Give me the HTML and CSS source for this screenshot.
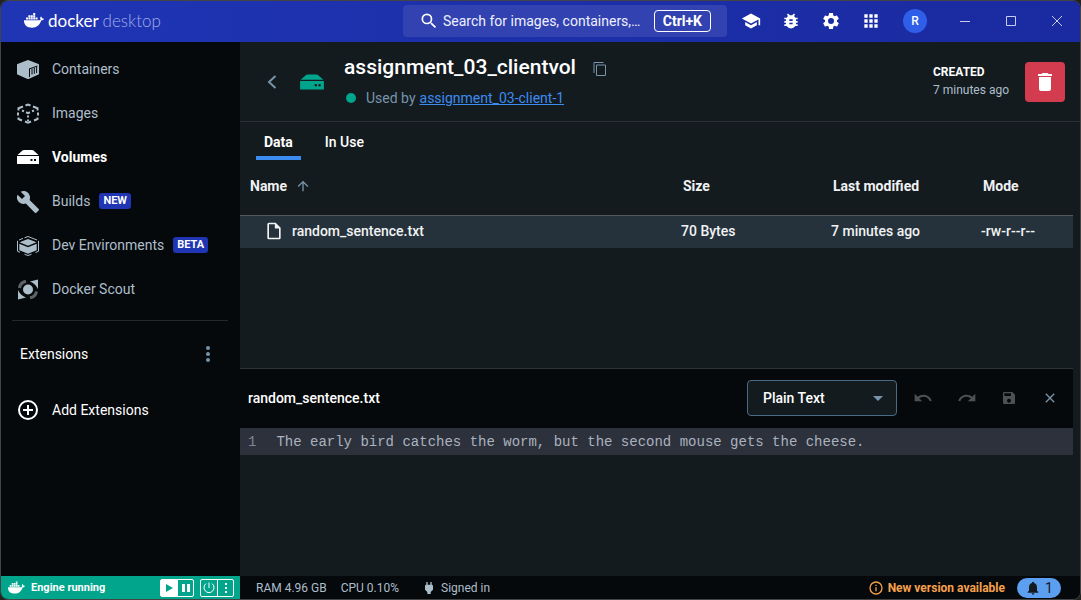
FILE: index.html
```html
<!DOCTYPE html>
<html lang="en">
<head>
<meta charset="utf-8">
<meta name="viewport" content="width=device-width, initial-scale=1">
<title>Docker Desktop</title>
<link rel="stylesheet" href="styles.css">
</head>
<body>
<svg class="defs" aria-hidden="true">
  <symbol id="whale" viewBox="0 0 20 15">
    <path d="M0 7.200h15.100c.8 0 1.300-.2 1.500-.5-.6-1-.5-2.300.3-3.200.9.600 1.300 1.200 1.400 2 .7-.1 1.300 0 1.700.3-.4 1.100-1.300 1.700-2.800 1.700C15.800 12 12.700 14.700 8 14.700 2.900 14.700-.2 12 0 7.200z"/>
    <path d="M2 4.600h2v2H2zM4.400 4.600h2v2h-2zM6.800 4.600h2v2h-2zM9.200 4.600h2v2h-2zM11.600 4.600h2v2h-2zM4.400 2.300h2v2h-2zM6.800 2.300h2v2h-2zM9.200 2.300h2v2h-2zM9.200 0h2v2h-2z"/>
  </symbol>
  <symbol id="volume" viewBox="0 0 24 24">
    <path d="M6.500 5.500Q7 5 8 5h8q1 0 1.500.5L22.500 10h-21zM1 11h22v7.500q0 .5-.5.500h-21q-.5 0-.5-.5z"/>
    <path class="drive-light" d="M14.500 14h2v2h-2zM18 14h2v2h-2z"/>
  </symbol>
</svg>
<div class="window">
  <header class="titlebar">
    <div class="brand">
      <svg class="brand-whale" viewBox="0 0 20 15" aria-hidden="true"><use href="#whale"/></svg>
      <span class="brand-name">docker <span class="brand-sub">desktop</span></span>
    </div>
    <label class="search">
      <svg class="icon-20" viewBox="0 0 24 24" aria-hidden="true"><path d="M15.500 14h-.79l-.28-.27A6.470 6.470 0 0 0 16 9.500 6.500 6.500 0 1 0 9.500 16c1.610 0 3.090-.59 4.230-1.570l.27.280v.79l5 4.990L20.490 19zm-6 0a4.500 4.500 0 1 1 0-9 4.500 4.500 0 0 1 0 9z"/></svg>
      <input class="search-input" type="text" placeholder="Search for images, containers,…" aria-label="Search">
      <kbd class="shortcut">Ctrl+K</kbd>
    </label>
    <div class="actions">
      <button class="action" aria-label="Learning center"><svg class="icon-20" viewBox="0 0 24 24"><path d="M5 13.180v4L12 21l7-3.820v-4L12 17zM12 3 1 9l11 6 9-4.910V17h2V9z"/></svg></button>
      <button class="action" aria-label="Troubleshoot"><svg class="icon-20" viewBox="0 0 24 24"><path d="M20 8h-2.810a5.985 5.985 0 0 0-1.820-1.960L17 4.410 15.590 3l-2.170 2.170a6.002 6.002 0 0 0-2.830 0L8.410 3 7 4.410l1.620 1.630C7.880 6.550 7.260 7.220 6.810 8H4v2h2.090c-.05.330-.09.660-.09 1v1H4v2h2v1c0 .34.040.67.090 1H4v2h2.810a5.990 5.990 0 0 0 10.380 0H20v-2h-2.090c.050-.33.090-.66.090-1v-1h2v-2h-2v-1c0-.34-.04-.67-.09-1H20zm-6 8h-4v-2h4zm0-4h-4v-2h4z"/></svg></button>
      <button class="action" aria-label="Settings"><svg class="icon-20" viewBox="0 0 24 24"><path d="M19.140 12.940c.040-.3.060-.61.060-.94 0-.32-.02-.64-.07-.94l2.030-1.580c.18-.14.230-.41.120-.61l-1.920-3.320c-.12-.22-.37-.29-.59-.22l-2.390.96c-.5-.38-1.030-.7-1.620-.94l-.36-2.540c-.04-.24-.24-.41-.48-.41h-3.840c-.24 0-.43.170-.47.410l-.36 2.540c-.59.240-1.130.570-1.620.940l-2.390-.96c-.22-.08-.47 0-.59.220L2.740 8.870c-.12.210-.08.470.120.610l2.030 1.580c-.05.300-.09.630-.09.940s.02.640.070.940l-2.030 1.580c-.18.140-.23.410-.12.610l1.920 3.320c.12.220.370.290.590.220l2.390-.96c.5.380 1.030.700 1.620.940l.36 2.540c.050.240.240.410.480.410h3.840c.24 0 .44-.17.470-.41l.36-2.540c.59-.24 1.130-.56 1.620-.94l2.390.960c.22.080.470 0 .59-.22l1.920-3.320c.12-.22.070-.47-.12-.61zM12 15.600A3.600 3.600 0 1 1 12 8.400a3.600 3.600 0 0 1 0 7.200z"/></svg></button>
      <button class="action" aria-label="Apps"><svg class="icon-20" viewBox="0 0 24 24"><path d="M4 4h4v4H4zM10 4h4v4h-4zM16 4h4v4h-4zM4 10h4v4H4zM10 10h4v4h-4zM16 10h4v4h-4zM4 16h4v4H4zM10 16h4v4h-4zM16 16h4v4h-4z"/></svg></button>
      <button class="avatar" aria-label="Account">R</button>
      <button class="win-btn" aria-label="Minimize"><svg class="win-icon" viewBox="0 0 12 12"><path d="M1 6.500h10"/></svg></button>
      <button class="win-btn" aria-label="Maximize"><svg class="win-icon" viewBox="0 0 12 12"><path d="M1.500 1.500h9v9h-9z"/></svg></button>
      <button class="win-btn" aria-label="Close"><svg class="win-icon" viewBox="0 0 12 12"><path d="m1 1 10 10M11 1 1 11"/></svg></button>
    </div>
  </header>

  <div class="body">
    <aside class="sidebar">
      <nav class="nav">
        <a class="nav-item" href="#containers">
          <svg class="icon-24" viewBox="0 0 24 24"><path d="M12 3q.3 0 .7.200L22.500 7q.5.300.5.800v9q0 .5-.5.700L12.500 22h-1L1.500 17.500q-.5-.2-.5-.7v-9q0-.5.500-.8l9.800-3.800q.4-.2.700-.2z"/><path class="slots" d="M13.500 12v8M16 11.500v6M18.300 10.800v6M20.600 10v6M13 12l8.500-3"/></svg>
          Containers</a>
        <a class="nav-item" href="#images">
          <svg class="icon-24 line" viewBox="0 0 24 24"><path d="m9.500 4.500 2.500-1 2.500 1M17 5.500l4.500 1.800v2.200M22 11.500v3M21.500 16.500V18L18 19.500M15 20.500l-3 1.200-3-1.200M6 19.500 2.500 18v-1.500M2 14.500v-3M2.500 9.500V7.300L7 5.500M6 9.500l2 .8M10 11.300l2 .8 2-.8M16 10.300l2-.8M12 14.500v2M12 18.500V20"/></svg>
          Images</a>
        <a class="nav-item active" href="#volumes" aria-current="page">
          <svg class="icon-24" viewBox="0 0 24 24"><use href="#volume"/></svg>
          Volumes</a>
        <a class="nav-item" href="#builds">
          <svg class="icon-24" viewBox="0 0 24 24"><path d="m22.700 20-9.100-9.100c.9-2.300.4-5-1.500-6.900-2-2-5-2.400-7.400-1.300L9 7l-3 3-4.400-4.300C.4 8.100.9 11.100 2.900 13.100c1.900 1.900 4.600 2.400 6.900 1.500l9.100 9.100c.4.400 1 .4 1.400 0l2.300-2.300c.5-.4.500-1.100.1-1.400z"/></svg>
          Builds <span class="tag">NEW</span></a>
        <a class="nav-item" href="#dev">
          <svg class="icon-24" viewBox="0 0 24 24"><path d="m12 6 8.500 3.300-8.500 3.500-8.500-3.500zM3.300 10.800l8.700 3.500 8.700-3.500v6.500L12 20.800l-8.700-3.500z"/><path class="thin" d="m8.500 4.800 3.500-1.300L21 7M3 7l4-1.600M1.500 7.800v10.500L4 19.300M22.500 7.800v10.500l-3 1.200M8.500 21.300l3.500 1.200 3.500-1.200"/></svg>
          Dev Environments <span class="tag">BETA</span></a>
        <a class="nav-item" href="#scout">
          <svg class="icon-24" viewBox="0 0 24 24"><path class="arc" d="M3.500 11Q4 5.500 10 4.200M20.500 14.500Q19.500 20 14 20.800"/><circle cx="12" cy="12.500" r="5"/><path d="M22 2.500V12Q19.500 6.500 14 4.500zM2 22.500V13q2.500 5.500 8 7.500z"/></svg>
          Docker Scout</a>
      </nav>
      <section class="extensions">
        <div class="ext-head">
          <span>Extensions</span>
          <button class="more" aria-label="Extension options"><svg class="icon-24" viewBox="0 0 24 24"><circle cx="12" cy="6" r="2"/><circle cx="12" cy="12" r="2"/><circle cx="12" cy="18" r="2"/></svg></button>
        </div>
        <button class="ext-add"><svg class="icon-24 plus" viewBox="0 0 24 24"><circle cx="12" cy="12" r="9"/><path d="M12 7v10M7 12h10"/></svg>Add Extensions</button>
      </section>
    </aside>

    <main class="main">
      <div class="volume-head">
        <button class="back" aria-label="Back"><svg class="icon-24" viewBox="0 0 24 24"><path d="m15.500 6-6.500 6 6.500 6"/></svg></button>
        <svg class="volume-icon" viewBox="0 0 24 24" aria-hidden="true"><use href="#volume"/></svg>
        <div class="volume-info">
          <div class="title-row">
            <h1 class="title">assignment_03_clientvol</h1>
            <button class="copy" aria-label="Copy name"><svg class="icon-16" viewBox="0 0 16 16"><path d="M2 12V1.500h9.500M4.500 4h9v10.500h-9z"/></svg></button>
          </div>
          <p class="used"><span class="dot"></span>Used by <a class="link" href="#client">assignment_03-client-1</a></p>
        </div>
        <div class="created">
          <strong class="created-label">CREATED</strong>
          <span>7 minutes ago</span>
        </div>
        <button class="delete" aria-label="Delete volume"><svg class="icon-24" viewBox="0 0 24 24"><path d="M6 19c0 1.100.9 2 2 2h8c1.100 0 2-.9 2-2V7H6zM19 4h-3.500l-1-1h-5l-1 1H5v2h14z"/></svg></button>
      </div>

      <div class="tabs" role="tablist">
        <button class="tab selected" role="tab" aria-selected="true">Data</button>
        <button class="tab" role="tab" aria-selected="false">In Use</button>
      </div>

      <div class="files">
        <table class="table">
          <colgroup><col><col class="col-size"><col class="col-date"><col class="col-mode"></colgroup>
          <thead>
            <tr>
              <th><span class="sort">Name <svg class="icon-16" viewBox="0 0 24 24"><path d="m4 12 1.410 1.410L11 7.830V20h2V7.830l5.580 5.590L20 12l-8-8z"/></svg></span></th>
              <th>Size</th><th>Last modified</th><th>Mode</th>
            </tr>
          </thead>
          <tbody>
            <tr>
              <td><span class="file"><svg class="icon-20" viewBox="0 0 24 24"><path d="M14 2H6c-1.100 0-2 .9-2 2v16c0 1.100.9 2 2 2h12c1.100 0 2-.9 2-2V8zM6 20V4h7v5h5v11z"/></svg>random_sentence.txt</span></td>
              <td>70 Bytes</td><td>7 minutes ago</td><td>-rw-r--r--</td>
            </tr>
          </tbody>
        </table>
      </div>

      <section class="editor">
        <div class="editor-head">
          <h2 class="editor-title">random_sentence.txt</h2>
          <div class="select-box">
            <select class="select" aria-label="Language"><option>Plain Text</option></select>
            <svg class="caret" viewBox="0 0 24 24" aria-hidden="true"><path d="m7 10 5 5 5-5z"/></svg>
          </div>
          <div class="tools">
            <button class="tool" aria-label="Undo"><svg class="icon-20" viewBox="0 0 24 24"><path d="M12.500 8c-2.650 0-5.050.990-6.900 2.600L2 7v9h9l-3.620-3.620A7.950 7.950 0 0 1 12.500 10.500c3.540 0 6.550 2.310 7.600 5.500l2.370-.78C21.080 11.030 17.150 8 12.500 8z"/></svg></button>
            <button class="tool" aria-label="Redo"><svg class="icon-20" viewBox="0 0 24 24"><path d="M18.400 10.600C16.550 8.990 14.150 8 11.500 8c-4.650 0-8.580 3.030-9.960 7.220L3.900 16a8.002 8.002 0 0 1 7.600-5.500c1.950 0 3.730.720 5.120 1.880L13 16h9V7z"/></svg></button>
            <button class="tool" aria-label="Save"><svg class="icon-16" viewBox="0 0 24 24"><path d="M17 3H5a2 2 0 0 0-2 2v14a2 2 0 0 0 2 2h14c1.100 0 2-.9 2-2V7zm-5 16a3 3 0 1 1 0-6 3 3 0 0 1 0 6zm3-10H5V5h10z"/></svg></button>
            <button class="tool close" aria-label="Close file"><svg class="icon-16" viewBox="0 0 24 24"><path d="M19 6.410 17.590 5 12 10.590 6.410 5 5 6.410 10.590 12 5 17.590 6.410 19 12 13.410 17.590 19 19 17.590 13.410 12z"/></svg></button>
          </div>
        </div>
        <div class="code-line"><span class="line-no">1</span><code class="code">The early bird catches the worm, but the second mouse gets the cheese.</code></div>
      </section>
    </main>
  </div>

  <footer class="statusbar">
    <div class="engine">
      <svg class="engine-whale" viewBox="0 0 20 15" aria-hidden="true"><use href="#whale"/></svg>
      <span class="engine-text">Engine running</span>
      <div class="group">
        <button class="mini filled" aria-label="Resume"><svg class="icon-16" viewBox="0 0 16 16"><path d="M5 4v8l7-4z"/></svg></button>
        <button class="mini" aria-label="Pause"><svg class="icon-16" viewBox="0 0 16 16"><path d="M4 4h3v8H4zM9 4h3v8H9z"/></svg></button>
      </div>
      <div class="group">
        <button class="mini" aria-label="Power"><svg class="icon-16 power" viewBox="0 0 16 16"><path d="M8 2.500V8M5 3.600a5 5 0 1 0 6 0"/></svg></button>
        <button class="mini" aria-label="Engine menu"><svg class="icon-16" viewBox="0 0 16 16"><path d="M7 3h2v2H7zM7 7h2v2H7zM7 11h2v2H7z"/></svg></button>
      </div>
    </div>
    <div class="stats">
      <span>RAM 4.96 GB</span>
      <span>CPU 0.10%</span>
      <span class="signed"><svg class="icon-16" viewBox="0 0 24 24"><path d="M16 7V3h-2v4h-4V3H8v4h-.01C7 6.990 6 7.990 6 8.990v5.490L9.500 18v3h5v-3l3.500-3.510v-5.500c0-1-1-2-2-1.990z"/></svg>Signed in</span>
    </div>
    <div class="notices">
      <a class="update" href="#update"><svg class="icon-16" viewBox="0 0 24 24"><path d="M11 7h2v2h-2zm0 4h2v6h-2zm1-9a10 10 0 1 0 0 20 10 10 0 0 0 0-20zm0 18a8 8 0 1 1 0-16 8 8 0 0 1 0 16z"/></svg>New version available</a>
      <button class="bell" aria-label="1 notification"><svg class="icon-16" viewBox="0 0 24 24"><path d="M12 22c1.100 0 2-.9 2-2h-4a2 2 0 0 0 2 2zm6-6v-5c0-3.070-1.640-5.640-4.500-6.320V4a1.500 1.500 0 0 0-3 0v.68C7.630 5.360 6 7.920 6 11v5l-2 2v1h16v-1z"/></svg>1</button>
    </div>
  </footer>
</div>
</body>
</html>
```

FILE: styles.css
```css
* { box-sizing: border-box; }
html, body { height: 100%; }
body {
  margin: 0;
  background: #22221f;
  color: #fff;
  font: 14px/20px Roboto, "Liberation Sans", sans-serif;
}
h1, h2, p { margin: 0; }
button {
  display: inline-flex;
  align-items: center;
  justify-content: center;
  margin: 0;
  padding: 0;
  border: 0;
  background: none;
  color: inherit;
  font: inherit;
}
a { color: inherit; text-decoration: none; }
svg { display: block; flex: none; fill: currentColor; }
.defs { position: absolute; width: 0; height: 0; }
.drive-light { fill: #06090c; }
.icon-16 { width: 16px; height: 16px; }
.icon-20 { width: 20px; height: 20px; }
.icon-24 { width: 24px; height: 24px; }

.window {
  display: flex;
  flex-direction: column;
  height: 100vh;
  border: 1px solid #444;
  border-radius: 8px;
  overflow: hidden;
  background: #141b1f;
}

/* Title bar */
.titlebar {
  display: grid;
  grid-template-columns: 1fr 324px auto;
  align-items: center;
  height: 41px;
  padding-bottom: 2px;
  flex: none;
  background: linear-gradient(90deg, #1f35b4, #1a2aa0);
}
.brand { display: flex; align-items: center; gap: 4px; padding-left: 23px; }
.brand-whale { width: 20px; height: 15px; }
.brand-name { font: 17px/24px Lato, sans-serif; white-space: nowrap; }
.brand-sub { color: #a0ace6; font-weight: 300; }
.search {
  display: flex;
  align-items: center;
  height: 32px;
  padding: 0 16px;
  border-radius: 4px;
  background: #3242b0;
}
.search-input {
  flex: 1;
  min-width: 0;
  margin-left: 4px;
  padding: 0;
  border: 0;
  background: none;
  color: #fff;
  font: inherit;
  outline: 0;
}
.search-input::placeholder { color: #eef0ff; opacity: 1; }
.shortcut {
  padding: 0 8px;
  border: 1px solid #fff;
  border-radius: 4px;
  font: 700 14px/20px Roboto, sans-serif;
}
.actions { display: flex; align-items: center; padding-left: 4px; }
.action { width: 40px; height: 39px; }
.avatar {
  width: 24px;
  height: 24px;
  margin: 0 15px 0 12px;
  border-radius: 50%;
  background: #2f5ee8;
  font-size: 12px;
  font-weight: 500;
}
.win-btn { width: 46px; height: 39px; }
.win-icon { width: 12px; height: 12px; fill: none; stroke: #c8cdf0; }

/* Sidebar */
.body { display: flex; flex: 1; min-height: 0; }
.sidebar { flex: none; width: 239px; background: #06090c; }
.nav { padding: 5px 0 9px; }
.nav-item {
  display: flex;
  align-items: center;
  height: 44px;
  padding-left: 15px;
  gap: 12px;
  color: #adbecb;
}
.nav-item.active { color: #fff; font-weight: 700; }
.slots { fill: none; stroke: #06090c; }
.line { fill: none; stroke: currentColor; stroke-width: 2; }
.thin { fill: none; stroke: currentColor; stroke-width: 1; }
.arc { fill: none; stroke: #5d6468; stroke-width: 3; }
.tag {
  margin-left: -3px;
  padding: 0 4px;
  border-radius: 3px;
  background: #1f35b4;
  color: #fff;
  font-size: 11px;
  font-weight: 700;
  line-height: 16px;
}
.extensions { margin: 0 12px 0 11px; padding-top: 11px; border-top: 1px solid #24292d; }
.ext-head { display: flex; align-items: center; justify-content: space-between; height: 44px; padding: 0 8px; }
.more { color: #7794ab; }
.ext-add { gap: 12px; height: 44px; margin-top: 12px; padding-left: 4px; }
.plus { fill: none; stroke: currentColor; stroke-width: 2; }

/* Volume details */
.main { display: flex; flex-direction: column; flex: 1; min-width: 0; }
.volume-head {
  display: flex;
  align-items: center;
  height: 80px;
  padding: 0 15px 0 20px;
  border-bottom: 1px solid #2b3136;
  flex: none;
}
.back { color: #7794ab; }
.back svg { fill: none; stroke: currentColor; stroke-width: 2; }
.volume-icon { width: 26px; height: 26px; margin: 0 19px 0 15px; color: #00a58c; }
.volume-info { flex: 1; min-width: 0; }
.title-row { display: flex; align-items: center; gap: 16px; height: 32px; }
.title { font-size: 21px; font-weight: 500; line-height: 28px; }
.copy { color: #7794ab; margin-top: 4px; }
.copy svg { fill: none; stroke: currentColor; stroke-width: 1; }
.used { display: flex; align-items: center; height: 30px; gap: 4px; color: #7794ab; }
.dot { width: 10px; height: 10px; margin: 0 6px 0 2px; border-radius: 50%; background: #00a58c; }
.link { color: #3c8bf0; text-decoration: underline; }
.created { display: flex; flex-direction: column; color: #adbecb; font-size: 12px; line-height: 18px; padding-bottom: 2px; }
.created-label { color: #fff; }
.delete { width: 40px; height: 40px; margin-left: 16px; border-radius: 4px; background: #d33c4e; }

.tabs { display: flex; gap: 16px; height: 38px; padding-left: 16px; flex: none; }
.tab { padding: 6px 8px 0; border-bottom: 4px solid transparent; font-weight: 500; }
.tab.selected { border-color: #3c8bf0; font-weight: 700; }

.files { flex: 1; min-height: 0; padding-right: 7px; }
.table { width: 100%; border-collapse: collapse; table-layout: fixed; color: #f0f2f4; font-weight: 500; }
.col-size, .col-date { width: 150px; }
.col-mode { width: 100px; }
.table th { height: 55px; padding: 0 10px 3px; border-bottom: 1px solid #55585a; text-align: left; font-weight: 700; }
.table td { height: 33px; padding: 0 8px 1px; background: #26323b; }
.sort, .file { display: flex; align-items: center; gap: 8px; }
.sort svg { color: #7794ab; }
.file { padding-left: 16px; }

/* Editor */
.editor { height: 208px; margin-right: 7px; border-top: 1px solid #303438; flex: none; }
.editor-head { display: flex; align-items: center; height: 59px; padding: 0 0 2px 8px; background: #06090c; }
.editor-title { flex: 1; font-size: 14px; font-weight: 500; line-height: 20px; }
.select-box { position: relative; width: 150px; }
.select {
  width: 100%;
  height: 36px;
  padding: 0 15px;
  border: 1px solid #4a6a86;
  border-radius: 4px;
  appearance: none;
  background: #141b1f;
  color: #fff;
  font: 500 14px/20px Roboto, sans-serif;
}
.caret { position: absolute; top: 6px; right: 7px; width: 24px; height: 24px; color: #7794ab; pointer-events: none; }
.tools { display: flex; padding: 0 3px 0 4px; }
.tool { width: 44px; height: 36px; color: #4d5154; }
.tool:nth-child(3) { width: 40px; }
.tool.close { width: 41px; color: #7794ab; }
.code-line {
  display: flex;
  gap: 20px;
  height: 27px;
  padding-left: 8px;
  align-items: center;
  background: #2c313c;
  color: #abb2bf;
  font: 14px/20px "Courier New", "Liberation Mono", monospace;
}
.line-no { color: #7d8799; }
.code { font: inherit; }

/* Status bar */
.statusbar { display: flex; flex: none; height: 23px; background: #06090c; color: #adbecb; font-size: 12px; line-height: 16px; }
.engine { display: flex; align-items: center; width: 239px; padding: 0 6px 0 7px; background: #00a58c; color: #fff; }
.engine-whale { width: 17px; height: 13px; }
.engine-text { flex: 1; margin-left: 6px; font-size: 11px; font-weight: 700; }
.group { display: flex; margin-left: 6px; border: 1px solid #fff; border-radius: 2px; }
.mini { width: 16px; height: 16px; }
.mini + .mini { border-left: 1px solid #fff; }
.mini.filled { background: #fff; color: #00a58c; }
.power { fill: none; stroke: currentColor; }
.stats { display: flex; flex: 1; align-items: center; gap: 14px; padding-left: 16px; }
.signed { display: flex; align-items: center; gap: 4px; margin-left: 8px; }
.notices { display: flex; align-items: center; gap: 12px; padding-right: 19px; }
.update { display: flex; align-items: center; gap: 4px; color: #f7a04b; font-weight: 700; }
.bell { gap: 4px; width: 44px; height: 20px; border-radius: 10px; background: #5c9ff0; color: #141b1f; font-size: 14px; }
```
